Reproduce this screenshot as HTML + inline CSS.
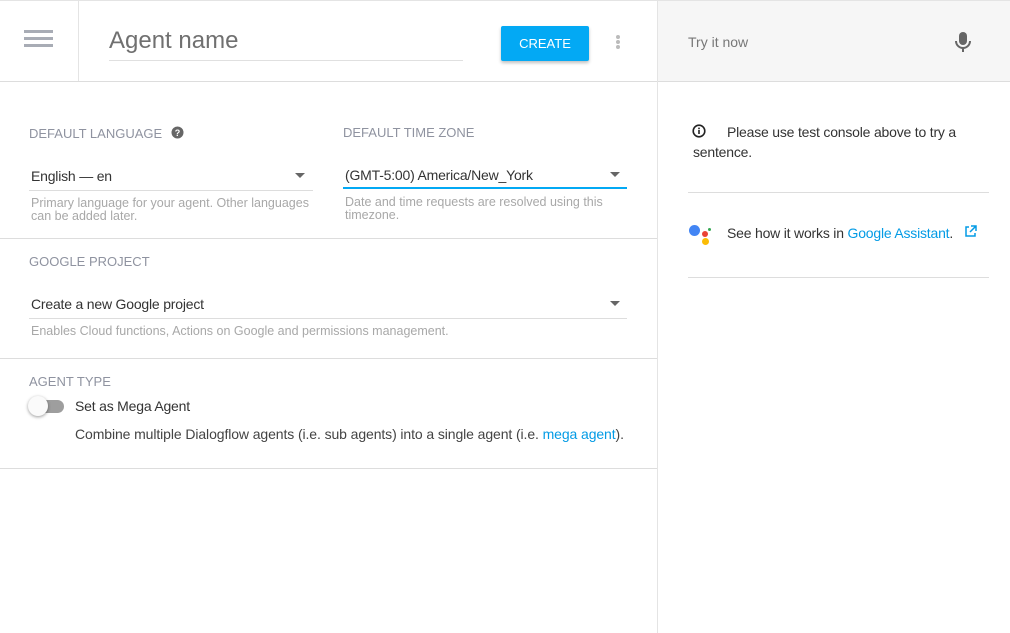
<!DOCTYPE html><html><head><style>
body{margin:0;width:1010px;height:633px;position:relative;font-family:"Liberation Sans",sans-serif;background:#fff;overflow:hidden}
.a{position:absolute;white-space:nowrap}
.lbl{font-size:13px;color:#8f93a0}
.val{font-size:14px;color:#333;letter-spacing:-0.2px}
.hlp{font-size:12.5px;color:#a8a8a8;line-height:13px}
.ln{position:absolute;height:1px;background:#ddd}
.tri{position:absolute;width:0;height:0;border-left:5px solid transparent;border-right:5px solid transparent;border-top:5px solid #666}
</style></head><body>
<div class="ln" style="left:0;top:0;width:1010px;background:#e4e4e4"></div>
<div class="a" style="left:657px;top:1px;width:353px;height:80px;background:#f6f6f6"></div>
<div class="ln" style="left:0;top:81px;width:1010px"></div>
<div class="a" style="left:78px;top:1px;width:1px;height:80px;background:#e4e4e4"></div>
<div class="a" style="left:657px;top:1px;width:1px;height:632px;background:#e4e4e4"></div>
<div class="a" style="left:24px;top:30px;width:29px;height:3px;background:#a8acb5;box-shadow:0 7px 0 #a8acb5,0 14px 0 #a8acb5"></div>
<div class="a" style="left:109px;top:27px;font-size:24px;color:#707070">Agent name</div>
<div class="ln" style="left:109px;top:60px;width:354px;background:#e0e0e0"></div>
<div class="a" style="left:501px;top:26px;width:88px;height:35px;background:#03a9f4;border-radius:2px;box-shadow:0 2px 3px rgba(0,0,0,.25);color:#fff;font-size:13px;text-align:center;line-height:36px">CREATE</div>
<div class="a" style="left:616px;top:35px;width:4px;height:4px;border-radius:2px;background:#bbb;box-shadow:0 5px 0 #bbb,0 10px 0 #bbb"></div>
<div class="a" style="left:688px;top:34px;font-size:14px;color:#777">Try it now</div>
<svg class="a" style="left:953px;top:31px" width="20" height="22" viewBox="0 0 20 22"><rect x="6" y="1" width="8" height="13" rx="4" fill="#666"/><path d="M3 10a7 7 0 0 0 14 0" stroke="#666" stroke-width="2" fill="none"/><rect x="9" y="16" width="2" height="5" fill="#666"/></svg>
<div class="a lbl" style="left:29px;top:126px">DEFAULT LANGUAGE</div>
<svg class="a" style="left:171px;top:126px" width="13" height="13" viewBox="0 0 13 13"><circle cx="6.5" cy="6.5" r="6" fill="#666"/><text x="6.5" y="10" font-size="9" font-weight="bold" fill="#fff" text-anchor="middle" font-family="Liberation Sans">?</text></svg>
<div class="a lbl" style="left:343px;top:125px">DEFAULT TIME ZONE</div>
<div class="a val" style="left:31px;top:168px">English — en</div>
<div class="tri" style="left:295px;top:173px"></div>
<div class="ln" style="left:29px;top:190px;width:284px"></div>
<div class="a hlp" style="left:31px;top:197px">Primary language for your agent. Other languages<br>can be added later.</div>
<div class="a val" style="left:345px;top:167px">(GMT-5:00) America/New_York</div>
<div class="tri" style="left:610px;top:172px"></div>
<div class="a" style="left:343px;top:187px;width:284px;height:2px;background:#03a9f4"></div>
<div class="a hlp" style="left:345px;top:196px">Date and time requests are resolved using this<br>timezone.</div>
<div class="ln" style="left:0;top:238px;width:657px"></div>
<div class="a lbl" style="left:29px;top:254px">GOOGLE PROJECT</div>
<div class="a val" style="left:31px;top:296px">Create a new Google project</div>
<div class="tri" style="left:610px;top:301px"></div>
<div class="ln" style="left:29px;top:318px;width:598px"></div>
<div class="a hlp" style="left:31px;top:325px">Enables Cloud functions, Actions on Google and permissions management.</div>
<div class="ln" style="left:0;top:358px;width:657px"></div>
<div class="a lbl" style="left:29px;top:374px">AGENT TYPE</div>
<div class="a" style="left:33px;top:400px;width:31px;height:13px;border-radius:7px;background:#9e9e9e"></div>
<div class="a" style="left:28px;top:396px;width:20px;height:20px;border-radius:10px;background:#fafafa;box-shadow:0 1px 3px rgba(0,0,0,.4)"></div>
<div class="a val" style="left:75px;top:398px">Set as Mega Agent</div>
<div class="a val" style="left:75px;top:426px;color:#444;letter-spacing:-0.1px">Combine multiple Dialogflow agents (i.e. sub agents) into a single agent (i.e. <span style="color:#039be5">mega agent</span>).</div>
<div class="ln" style="left:0;top:468px;width:657px"></div>
<svg class="a" style="left:692px;top:124px" width="14" height="14" viewBox="0 0 14 14"><circle cx="7" cy="7" r="5.8" stroke="#222" stroke-width="1.6" fill="none"/><rect x="6.2" y="6" width="1.6" height="4" fill="#222"/><rect x="6.2" y="3.6" width="1.6" height="1.6" fill="#222"/></svg>
<div class="a val" style="left:727px;top:122px;line-height:20px;color:#333">Please use test console above to try a</div>
<div class="a val" style="left:693px;top:142px;line-height:20px;color:#333">sentence.</div>
<div class="ln" style="left:688px;top:192px;width:301px"></div>
<div class="a" style="left:689px;top:225px;width:11px;height:11px;border-radius:6px;background:#4285f4"></div>
<div class="a" style="left:702px;top:231px;width:6px;height:6px;border-radius:3px;background:#ea4335"></div>
<div class="a" style="left:708px;top:228px;width:3px;height:3px;border-radius:2px;background:#34a853"></div>
<div class="a" style="left:702px;top:238px;width:7px;height:7px;border-radius:4px;background:#fbbc05"></div>
<div class="a val" style="left:727px;top:225px;color:#333">See how it works in <span style="color:#039be5">Google Assistant</span>.</div>
<svg class="a" style="left:964px;top:225px" width="13" height="13" viewBox="0 0 13 13"><path d="M5 2H2v9h9V8" stroke="#039be5" stroke-width="1.5" fill="none"/><path d="M7 1h5v5M12 1L6 7" stroke="#039be5" stroke-width="1.5" fill="none"/></svg>
<div class="ln" style="left:688px;top:277px;width:301px"></div>
</body></html>
